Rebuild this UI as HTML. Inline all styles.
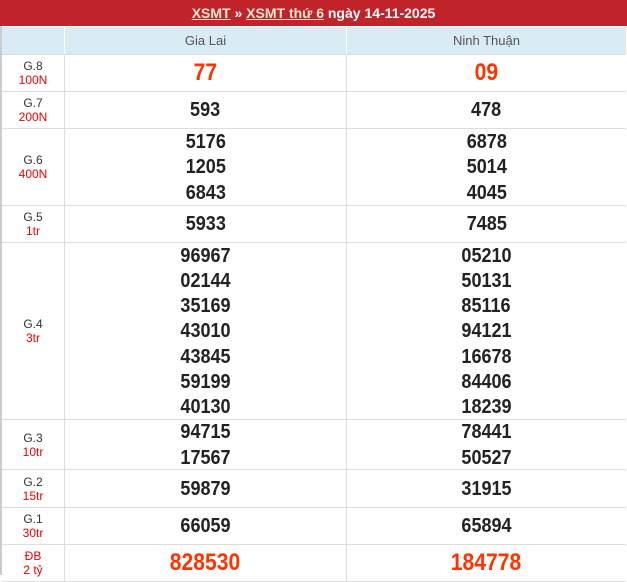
<!DOCTYPE html><html><head><meta charset="utf-8"><style>
body{margin:0;width:627px;height:575px;overflow:hidden;background:#fff;font-family:"Liberation Sans",Arial,sans-serif}
.hd{position:absolute;left:0;top:0;width:627px;height:26px;background:#c1232b;color:#fff;font-weight:bold;font-size:14px;text-align:center;line-height:26px}
.hd u{color:#fde8d0}
.r{position:absolute;left:2px;width:624px;border-bottom:1px solid #ddd;box-sizing:border-box}
.c{position:absolute;top:0;bottom:0;display:flex;flex-direction:column;justify-content:center;align-items:center}
.c0{left:0;width:62px;border-right:1px solid #ddd;font-size:12px;color:#333;line-height:14px}
.c1{left:63px;width:281px;border-right:1px solid #ddd}
.c2{left:345px;width:279px}
.c0 span{color:#e00}
.n{font-weight:bold;font-size:20.5px;color:#222;line-height:25.2px;transform:scaleX(.88)}
.red{color:#ff3300;font-size:24px}
</style></head><body>
<div class="hd"><u>XSMT</u> » <u>XSMT thứ 6</u> ngày 14-11-2025</div>
<div style="position:absolute;left:0;top:26px;width:2px;height:549px;background:#ccc"></div>
<div class="r" style="top:27px;height:28px;background:#d9ecf5"><div class="c c0" style="border-color:#fff"></div><div class="c c1" style="border-color:#fff;font-size:13px;color:#555">Gia Lai</div><div class="c c2" style="font-size:13px;color:#555">Ninh Thuận</div></div>
<div class="r" style="top:55px;height:37px"><div class="c c0">G.8<span>100N</span></div><div class="c c1"><div class="n red">77</div></div><div class="c c2"><div class="n red">09</div></div></div>
<div class="r" style="top:92px;height:37px"><div class="c c0">G.7<span>200N</span></div><div class="c c1"><div class="n">593</div></div><div class="c c2"><div class="n">478</div></div></div>
<div class="r" style="top:129px;height:77px"><div class="c c0">G.6<span>400N</span></div><div class="c c1"><div class="n">5176<br>1205<br>6843</div></div><div class="c c2"><div class="n">6878<br>5014<br>4045</div></div></div>
<div class="r" style="top:206px;height:37px"><div class="c c0">G.5<span>1tr</span></div><div class="c c1"><div class="n">5933</div></div><div class="c c2"><div class="n">7485</div></div></div>
<div class="r" style="top:243px;height:177px"><div class="c c0">G.4<span>3tr</span></div><div class="c c1"><div class="n">96967<br>02144<br>35169<br>43010<br>43845<br>59199<br>40130</div></div><div class="c c2"><div class="n">05210<br>50131<br>85116<br>94121<br>16678<br>84406<br>18239</div></div></div>
<div class="r" style="top:420px;height:50px"><div class="c c0">G.3<span>10tr</span></div><div class="c c1"><div class="n">94715<br>17567</div></div><div class="c c2"><div class="n">78441<br>50527</div></div></div>
<div class="r" style="top:470px;height:38px"><div class="c c0">G.2<span>15tr</span></div><div class="c c1"><div class="n">59879</div></div><div class="c c2"><div class="n">31915</div></div></div>
<div class="r" style="top:508px;height:37px"><div class="c c0">G.1<span>30tr</span></div><div class="c c1"><div class="n">66059</div></div><div class="c c2"><div class="n">65894</div></div></div>
<div class="r" style="top:545px;height:37px"><div class="c c0"><span>ĐB</span><span>2 tỷ</span></div><div class="c c1"><div class="n red">828530</div></div><div class="c c2"><div class="n red">184778</div></div></div>
</body></html>
